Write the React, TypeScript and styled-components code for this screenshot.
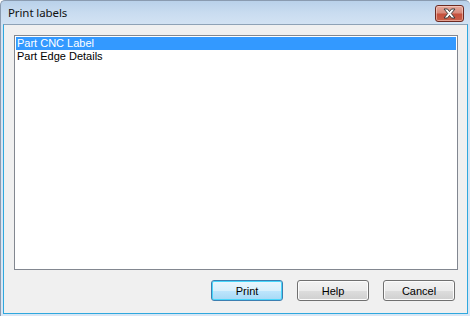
import styled, { createGlobalStyle } from "styled-components";

const GlobalStyle = createGlobalStyle`
  html, body {
    margin: 0;
    padding: 0;
    background: #ffffff;
  }
  body {
    font-family: "Liberation Sans", Arial, sans-serif;
  }
`;

const labels = ["Part CNC Label", "Part Edge Details"];

const buttons = [
  { text: "Print", isDefault: true },
  { text: "Help", isDefault: false },
  { text: "Cancel", isDefault: false },
];

const App = () => {
  const selected = 0;

  return (
    <>
      <GlobalStyle />
      <Window>
        <TitleBar>
          <Title>Print labels</Title>
          <CloseButton aria-label="Close">
            <svg width="15" height="11" viewBox="0 0 15 11">
              <path
                d="M2 1 L5.5 1 L7.5 3.6 L9.5 1 L13 1 L9.3 5.5 L13 10 L9.5 10 L7.5 7.4 L5.5 10 L2 10 L5.7 5.5 Z"
                fill="#ffffff"
                stroke="#3d3d3d"
                strokeWidth="1"
                strokeLinejoin="round"
              />
            </svg>
          </CloseButton>
        </TitleBar>
        <Client>
          <ListBox>
            {labels.map((label, i) => (
              <ListItem key={label} selected={i === selected}>
                {label}
              </ListItem>
            ))}
          </ListBox>
          <ButtonRow>
            {buttons.map((b) => (
              <DialogButton key={b.text} isDefault={b.isDefault}>
                {b.text}
              </DialogButton>
            ))}
          </ButtonRow>
        </Client>
      </Window>
    </>
  );
};

const Window = styled.div`
  width: 470px;
  height: 316px;
  box-sizing: border-box;
  display: flex;
  flex-direction: column;
  background: linear-gradient(to bottom, #b9d1ea 0px, #c9dcf0 12px, #d4e3f3 25px, #d9e7f5 100%);
  border-left: 1px solid #8a9bb0;
  border-top: 1px solid #8a9bb0;
  border-radius: 5px 5px 0 0;
  padding: 0 2px 2px 2px;
`;

const TitleBar = styled.div`
  height: 24px;
  display: flex;
  align-items: flex-start;
  justify-content: space-between;
  padding: 0 4px 0 5px;
`;

const Title = styled.span`
  font-family: "Noto Sans", "Open Sans", sans-serif;
  font-size: 11.5px;
  letter-spacing: -0.1px;
  color: #101010;
  margin-top: 4px;
`;

const CloseButton = styled.div`
  width: 27px;
  height: 15px;
  margin-top: 4px;
  border: 1px solid #6d2a22;
  border-radius: 3px;
  background: linear-gradient(to bottom, #e5a99d 0%, #d88b7c 45%, #c5503d 55%, #c9614a 100%);
  box-shadow: inset 0 0 0 1px rgba(255, 225, 215, 0.5);
  display: flex;
  align-items: center;
  justify-content: center;
`;

const Client = styled.div`
  flex: 1;
  display: flex;
  flex-direction: column;
  background: #f0f0f0;
  border: 1px solid #2fa8de;
  border-top-color: #8ea2b6;
  padding: 10px 9px 12px 10px;
`;

const ListBox = styled.div`
  height: 231px;
  background: #ffffff;
  border: 1px solid #828790;
  padding: 1px;
  display: flex;
  flex-direction: column;
`;

const ListItem = styled.div<{ selected: boolean }>`
  height: 13px;
  line-height: 13px;
  font-size: 11px;
  padding-left: 1px;
  color: ${(p) => (p.selected ? "#ffffff" : "#000000")};
  background: ${(p) => (p.selected ? "#3399ff" : "transparent")};
`;

const ButtonRow = styled.div`
  display: flex;
  justify-content: flex-end;
  gap: 14px;
  margin-top: 10px;
  padding-right: 3px;
`;

const DialogButton = styled.div<{ isDefault: boolean }>`
  width: 70px;
  height: 19px;
  box-sizing: content-box;
  border: 1px solid ${(p) => (p.isDefault ? "#3c7fb1" : "#707070")};
  border-radius: 3px;
  font-size: 11px;
  color: #000000;
  display: flex;
  align-items: center;
  justify-content: center;
  background: ${(p) =>
    p.isDefault
      ? "linear-gradient(to bottom, #eaf6fd 0%, #d9f0fc 50%, #bee6fd 51%, #a7d9f5 100%)"
      : "linear-gradient(to bottom, #f2f2f2 0%, #ebebeb 50%, #dddddd 51%, #cfcfcf 100%)"};
  box-shadow: ${(p) =>
    p.isDefault
      ? "inset 0 0 0 1px #48d6fb"
      : "inset 0 0 0 1px #fcfcfc"};
`;

export default App;
